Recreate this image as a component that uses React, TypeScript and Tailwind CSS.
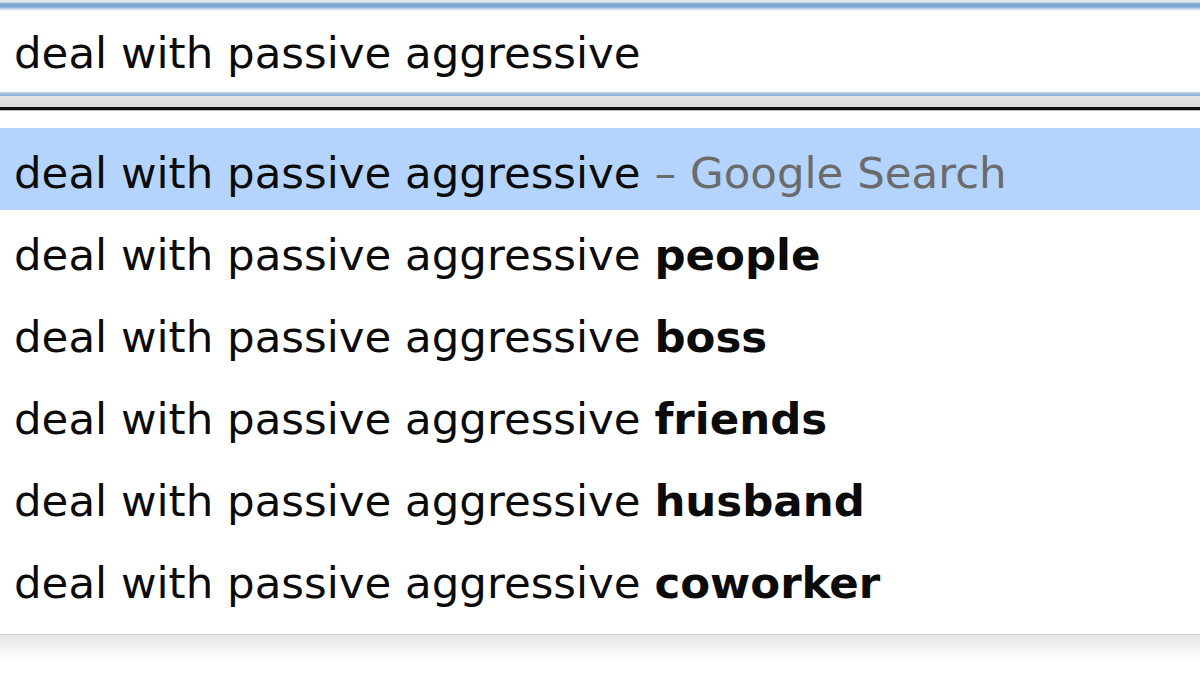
import React from "react";

const query = "deal with passive aggressive";

const suggestions = ["people", "boss", "friends", "husband", "coworker"];

export default function App() {
  return (
    <div
      className="h-[675px] w-[1200px] overflow-hidden bg-white text-[#0b0b0b]"
      style={{ fontFamily: '"DejaVu Sans", Verdana, sans-serif' }}
    >
      {/* input top border */}
      <div className="h-[11px] bg-[linear-gradient(to_bottom,#ececec_0px,#d2deec_2px,#7aa2d1_4px,#82a9d6_7px,#c9dbef_9px,#ffffff_11px)]" />
      <div className="flex h-[81px] items-center pl-[14px] pt-[5px] text-[43.5px] leading-none">
        {query}
      </div>
      {/* input bottom border + separator */}
      <div className="h-[4px] bg-[linear-gradient(to_bottom,#c3d6ec,#7fa6d3)]" />
      <div className="h-[11px] bg-[linear-gradient(to_bottom,#e4e4e4,#dadada)]" />
      <div className="h-[3px] bg-[#111111]" />
      <div className="h-[1px] bg-[#bdbdbd]" />
      <div className="h-[17px]" />

      <ul className="text-[43.5px] leading-[74px]">
        <li className="h-[82px] bg-[#b4d4fd] pl-[14px] pt-[8px] whitespace-pre">
          {query}
          <span className="text-[#6b6b6b]"> – Google Search</span>
        </li>
        {suggestions.map((s) => (
          <li key={s} className="h-[82px] pl-[14px] pt-[8px] whitespace-pre">
            {query} <span className="font-bold">{s}</span>
          </li>
        ))}
      </ul>

      <div className="h-[14px]" />
      <div className="h-[1px] bg-[#d0d0d0]" />
      <div className="h-[26px] bg-[linear-gradient(to_bottom,#e6e6e6,#ffffff)]" />
    </div>
  );
}
